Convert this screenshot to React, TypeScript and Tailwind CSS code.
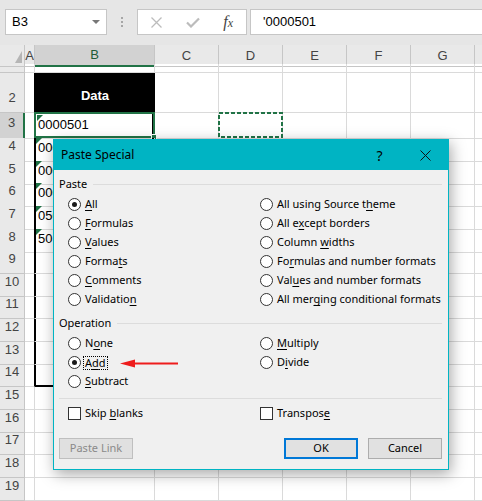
import React from 'react';

// row number + height class (heights add up to the visible sheet area)
const rows = [
  { n: 1, h: 'h-[9px]', value: '' },
  { n: 2, h: 'h-[40px]', value: 'Data' },
  { n: 3, h: 'h-[25px]', value: '0000501' },
  { n: 4, h: 'h-[23px]', value: '0000502' },
  { n: 5, h: 'h-[22px]', value: '0000503' },
  { n: 6, h: 'h-[23px]', value: '0000504' },
  { n: 7, h: 'h-[23px]', value: '0501' },
  { n: 8, h: 'h-[22px]', value: '501' },
  { n: 9, h: 'h-[23px]', value: '' },
  { n: 10, h: 'h-[23px]', value: '' },
  { n: 11, h: 'h-[22px]', value: '' },
  { n: 12, h: 'h-[23px]', value: '' },
  { n: 13, h: 'h-[23px]', value: '' },
  { n: 14, h: 'h-[22px]', value: '' },
  { n: 15, h: 'h-[23px]', value: '' },
  { n: 16, h: 'h-[23px]', value: '' },
  { n: 17, h: 'h-[22px]', value: '' },
  { n: 18, h: 'h-[23px]', value: '' },
  { n: 19, h: 'h-[23px]', value: '' },
];

const gridCols = 'grid grid-cols-[25px_10px_120px_64px_64px_64px_64px_64px_64px]';
const cell = 'border-r border-b border-[#dadada]';

const Hotkey = ({ text, at }: { text: string; at: number }) => (
  <span>
    {text.slice(0, at)}
    <u className="underline-offset-[2px]">{text[at]}</u>
    {text.slice(at + 1)}
  </span>
);

const Radio = ({ text, at, checked = false, focused = false }: { text: string; at: number; checked?: boolean; focused?: boolean }) => (
  <div className="flex items-center h-[19px] gap-[4px]">
    <span className="w-[13px] h-[13px] rounded-full border border-[#333] bg-white flex items-center justify-center shrink-0">
      {checked && <span className="w-[5px] h-[5px] rounded-full bg-[#1a1a1a]" />}
    </span>
    {focused ? (
      <span className="-ml-[2px] px-[1px] border border-dotted border-black leading-[12px]">
        <Hotkey text={text} at={at} />
      </span>
    ) : (
      <Hotkey text={text} at={at} />
    )}
  </div>
);

const Checkbox = ({ text, at }: { text: string; at: number }) => (
  <div className="flex items-center h-[19px] gap-[4px]">
    <span className="w-[13px] h-[13px] border border-[#333] bg-white shrink-0" />
    <Hotkey text={text} at={at} />
  </div>
);

const GroupLabel = ({ text }: { text: string }) => (
  <div className="flex items-center h-[16px]">
    <span>{text}</span>
    <span className="flex-1 h-px bg-[#dcdcdc] ml-[6px]" />
  </div>
);

const FormulaBar = () => (
  <div className="h-[45px] bg-[#e6e6e6] flex items-start pt-[9px] font-['Liberation_Sans',Arial,sans-serif] text-[13px] text-black">
    <div className="ml-[5px] w-[102px] h-[26px] bg-white border border-[#c6c6c6] flex items-center pl-[6px]">
      <span>B3</span>
      <span className="ml-auto mr-[6px] w-0 h-0 border-l-[4px] border-r-[4px] border-t-[4px] border-l-transparent border-r-transparent border-t-[#777]" />
    </div>
    <div className="w-[30px] flex flex-col items-center gap-[2px] pt-[8px]">
      <span className="w-[2px] h-[2px] bg-[#a6a6a6]" />
      <span className="w-[2px] h-[2px] bg-[#a6a6a6]" />
      <span className="w-[2px] h-[2px] bg-[#a6a6a6]" />
    </div>
    <div className="w-[110px] h-[26px] bg-white border border-[#c6c6c6] flex items-center pl-[1px]">
      <span className="w-[36px] flex justify-center">
        <svg width="11" height="11" viewBox="0 0 11 11">
          <path d="M0.5 0.5 L10.5 10.5 M10.5 0.5 L0.5 10.5" stroke="#bcbcbc" strokeWidth="1.3" />
        </svg>
      </span>
      <span className="w-[36px] flex justify-center">
        <svg width="14" height="11" viewBox="0 0 14 11">
          <path d="M1 5.5 L5 9.5 L13 1.5" stroke="#bcbcbc" strokeWidth="2.2" fill="none" />
        </svg>
      </span>
      <span className="w-[36px] flex justify-center items-baseline italic font-['Liberation_Serif',serif] text-[16px] text-[#444] leading-none">
        f<span className="text-[12px]">x</span>
      </span>
    </div>
    <div className="ml-[3px] flex-1 h-[26px] bg-white border border-r-0 border-[#c6c6c6] flex items-center pl-[12px]">
      '0000501
    </div>
  </div>
);

const ColumnHeader = () => (
  <div className={`${gridCols} h-[19px] bg-[#e9e9e9] text-[13px] text-[#444]`}>
    <div className="relative border-r border-b border-[#c6c6c6]">
      <svg className="absolute right-[2px] bottom-[3px]" width="7" height="12" viewBox="0 0 7 12">
        <path d="M7 0 L7 12 L0 12 Z" fill="#b5b5b5" />
      </svg>
    </div>
    {['A', 'B', 'C', 'D', 'E', 'F', 'G', ''].map((c, i) => (
      <div
        key={i}
        className={
          c === 'B'
            ? 'flex items-center justify-center bg-[#d2d2d2] border-r border-[#c6c6c6] border-b-2 border-b-[#217346] text-[#1e5c38]'
            : 'flex items-center justify-center overflow-hidden border-r border-b border-[#c6c6c6]'
        }
      >
        {c}
      </div>
    ))}
  </div>
);

const Sheet = () => (
  <div className="font-['Liberation_Sans',Arial,sans-serif]">
    <ColumnHeader />
    {rows.map((r) => {
      const boxed = r.n >= 2 && r.n <= 14;
      const flagged = r.n >= 3 && r.n <= 8;
      return (
        <div key={r.n} className={`${gridCols} ${r.h} text-[13px]`}>
          <div
            className={
              r.n === 3
                ? 'flex justify-center items-end pb-[5px] bg-[#d2d2d2] border-b border-[#c6c6c6] border-r-2 border-r-[#217346] text-[#444]'
                : 'flex justify-center items-end pb-[5px] overflow-hidden bg-[#e9e9e9] border-r border-b border-[#c6c6c6] text-[#444]'
            }
          >
            {r.n === 1 ? '' : r.n}
          </div>
          <div className={boxed ? 'border-b border-[#dadada] border-r border-r-black' : cell} />
          {r.n === 2 ? (
            <div className="bg-black text-white font-bold flex items-center justify-center pt-[5px]">Data</div>
          ) : (
            <div
              className={
                r.n === 14
                  ? 'relative border-r border-[#dadada] border-b-2 border-b-black shadow-[inset_1px_0_0_#000,inset_-2px_0_0_#000]'
                  : boxed
                  ? `relative ${cell} flex items-end pb-[3px] pl-[3px] shadow-[inset_1px_0_0_#000,inset_-2px_0_0_#000]`
                  : `relative ${cell}`
              }
            >
              {flagged && (
                <span
                  className={
                    r.n === 3
                      ? 'absolute left-[2px] top-[2px] w-0 h-0 border-t-[6px] border-r-[6px] border-t-[#1e7145] border-r-transparent'
                      : 'absolute left-[1px] top-0 w-0 h-0 border-t-[6px] border-r-[6px] border-t-[#1e7145] border-r-transparent'
                  }
                />
              )}
              {r.value}
              {r.n === 3 && (
                <div className="absolute -left-[1px] -top-[1px] -right-[1px] bottom-0 border-2 border-[#217346]">
                  <span className="absolute -right-[4px] -bottom-[4px] w-[6px] h-[6px] bg-[#217346] border border-white" />
                </div>
              )}
            </div>
          )}
          <div className={cell} />
          <div className={`relative ${cell}`}>
            {r.n === 3 && (
              <svg className="absolute -left-[1px] -top-[1px]" width="65" height="26" viewBox="0 0 65 26">
                <rect x="1" y="1" width="63" height="24" fill="none" stroke="#217346" strokeWidth="2" strokeDasharray="4 2" />
              </svg>
            )}
          </div>
          <div className={cell} />
          <div className={cell} />
          <div className={cell} />
          <div className={cell} />
        </div>
      );
    })}
  </div>
);

const PasteSpecialDialog = () => (
  <div className="absolute left-[53px] top-[139px] w-[396px] h-[331px] border border-[#00b4c3] bg-[#f0f0f0] shadow-[2px_4px_14px_rgba(0,0,0,0.35)] font-['Noto_Sans',sans-serif] text-[11px] text-black">
    <div className="h-[30px] bg-[#00b4c3] flex items-center">
      <span className="pl-[7px] text-[12px]">Paste Special</span>
      <div className="ml-auto flex h-full">
        <div className="w-[45px] flex items-center justify-center text-[14px]">?</div>
        <div className="w-[46px] flex items-center justify-center">
          <svg width="11" height="11" viewBox="0 0 11 11">
            <path d="M0.5 0.5 L10.5 10.5 M10.5 0.5 L0.5 10.5" stroke="#111" strokeWidth="1" />
          </svg>
        </div>
      </div>
    </div>

    <div className="pl-[5px] pr-[6px] pt-[6px]">
      <GroupLabel text="Paste" />
      <div className="mt-[3px] pl-[9px] grid grid-cols-[192px_1fr]">
        <Radio text="All" at={0} checked />
        <Radio text="All using Source theme" at={18} />
        <Radio text="Formulas" at={0} />
        <Radio text="All except borders" at={5} />
        <Radio text="Values" at={0} />
        <Radio text="Column widths" at={7} />
        <Radio text="Formats" at={5} />
        <Radio text="Formulas and number formats" at={2} />
        <Radio text="Comments" at={0} />
        <Radio text="Values and number formats" at={3} />
        <Radio text="Validation" at={9} />
        <Radio text="All merging conditional formats" at={7} />
      </div>

      <div className="mt-[6px]">
        <GroupLabel text="Operation" />
      </div>
      <div className="mt-[3px] pl-[9px] grid grid-cols-[192px_1fr]">
        <Radio text="None" at={1} />
        <Radio text="Multiply" at={0} />
        <Radio text="Add" at={1} checked focused />
        <Radio text="Divide" at={1} />
        <Radio text="Subtract" at={0} />
      </div>

      <div className="mt-[7px] h-px bg-[#dcdcdc]" />

      <div className="mt-[5px] pl-[9px] grid grid-cols-[192px_1fr]">
        <Checkbox text="Skip blanks" at={5} />
        <Checkbox text="Transpose" at={8} />
      </div>

      <div className="mt-[15px] flex">
        <button className="w-[74px] h-[21px] border border-[#bfbfbf] bg-[#e0e0e0] text-[#8a8a8a]">Paste Link</button>
        <button className="ml-auto w-[74px] h-[21px] border-2 border-[#0078d7] bg-[#e1e1e1]">OK</button>
        <button className="ml-[10px] w-[74px] h-[21px] border border-[#adadad] bg-[#e1e1e1]">Cancel</button>
      </div>
    </div>
  </div>
);

export default function App() {
  return (
    <div className="relative w-[482px] h-[501px] overflow-hidden bg-white">
      <FormulaBar />
      <Sheet />
      <PasteSpecialDialog />
      {/* red pointer next to the Add option */}
      <svg className="absolute left-[119px] top-[359px]" width="60" height="9" viewBox="0 0 60 9">
        <path d="M1 4.5 L16 0.5 L16 8.5 Z" fill="#ee1c1c" />
        <path d="M14 4.5 L59 4.5" stroke="#ee1c1c" strokeWidth="2" />
      </svg>
    </div>
  );
}
